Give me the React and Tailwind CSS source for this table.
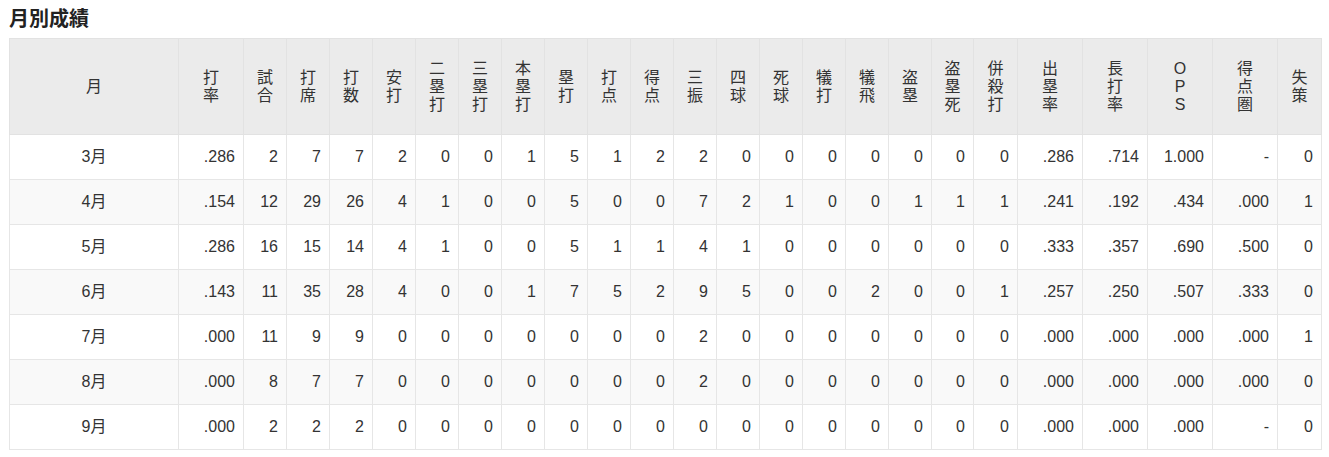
import React from 'react';

// ── Column definitions ────────────────────────────────────────────────────────
const COLS = [
  { label: '打率', w: 'w-[65px]' },
  { label: '試合', w: 'w-[43px]' },
  { label: '打席', w: 'w-[43px]' },
  { label: '打数', w: 'w-[43px]' },
  { label: '安打', w: 'w-[43px]' },
  { label: '二塁打', w: 'w-[43px]' },
  { label: '三塁打', w: 'w-[43px]' },
  { label: '本塁打', w: 'w-[43px]' },
  { label: '塁打', w: 'w-[43px]' },
  { label: '打点', w: 'w-[43px]' },
  { label: '得点', w: 'w-[43px]' },
  { label: '三振', w: 'w-[43px]' },
  { label: '四球', w: 'w-[43px]' },
  { label: '死球', w: 'w-[43px]' },
  { label: '犠打', w: 'w-[43px]' },
  { label: '犠飛', w: 'w-[43px]' },
  { label: '盗塁', w: 'w-[43px]' },
  { label: '盗塁死', w: 'w-[42px]' },
  { label: '併殺打', w: 'w-[44px]' },
  { label: '出塁率', w: 'w-[65px]' },
  { label: '長打率', w: 'w-[65px]' },
  { label: 'OPS', w: 'w-[65px]' },
  { label: '得点圏', w: 'w-[65px]' },
  { label: '失策', w: 'w-[44px]' },
];

const ROWS = [
  ['3月', '.286', 2, 7, 7, 2, 0, 0, 1, 5, 1, 2, 2, 0, 0, 0, 0, 0, 0, 0, '.286', '.714', '1.000', '-', 0],
  ['4月', '.154', 12, 29, 26, 4, 1, 0, 0, 5, 0, 0, 7, 2, 1, 0, 0, 1, 1, 1, '.241', '.192', '.434', '.000', 1],
  ['5月', '.286', 16, 15, 14, 4, 1, 0, 0, 5, 1, 1, 4, 1, 0, 0, 0, 0, 0, 0, '.333', '.357', '.690', '.500', 0],
  ['6月', '.143', 11, 35, 28, 4, 0, 0, 1, 7, 5, 2, 9, 5, 0, 0, 2, 0, 0, 1, '.257', '.250', '.507', '.333', 0],
  ['7月', '.000', 11, 9, 9, 0, 0, 0, 0, 0, 0, 0, 2, 0, 0, 0, 0, 0, 0, 0, '.000', '.000', '.000', '.000', 1],
  ['8月', '.000', 8, 7, 7, 0, 0, 0, 0, 0, 0, 0, 2, 0, 0, 0, 0, 0, 0, 0, '.000', '.000', '.000', '.000', 0],
  ['9月', '.000', 2, 2, 2, 0, 0, 0, 0, 0, 0, 0, 0, 0, 0, 0, 0, 0, 0, 0, '.000', '.000', '.000', '-', 0],
];

const font = "[font-family:'Liberation_Sans','Noto_Sans_CJK_JP',sans-serif]";

// ── Stacked header label (one glyph per line) ─────────────────────────────────
const Stack = ({ text }) => (
  <div className="flex flex-col items-center leading-[18px]">
    {[...text].map((ch, i) => (
      <span key={i}>{ch}</span>
    ))}
  </div>
);

export default function App() {
  return (
    <div className={`bg-white pl-[9px] pt-[6px] pb-2 text-[#333] ${font}`}>
      <h2 className="text-[20px] font-bold leading-[26px] text-[#222] mb-[6px]">月別成績</h2>

      <table className="table-fixed border-collapse w-[1312px] text-[16px] border border-[#dcdcdc]">
        <colgroup>
          <col className="w-[169px]" />
          {COLS.map((c, i) => (
            <col key={i} className={c.w} />
          ))}
        </colgroup>
        <thead>
          <tr className="bg-[#ebebeb]">
            <th className="h-[96px] font-normal border border-[#e2e2e2] text-center align-middle">
              月
            </th>
            {COLS.map((c, i) => (
              <th
                key={i}
                className="h-[96px] font-normal border border-[#e2e2e2] text-center align-middle p-0"
              >
                <Stack text={c.label} />
              </th>
            ))}
          </tr>
        </thead>
        <tbody>
          {ROWS.map((row, r) => (
            <tr key={r} className={r % 2 === 1 ? 'bg-[#f9f9f9]' : 'bg-white'}>
              {row.map((v, i) => (
                <td
                  key={i}
                  className={`h-[45px] border border-[#e6e6e6] align-middle ${
                    i === 0 ? 'text-center' : 'text-right pr-[8px]'
                  }`}
                >
                  {v}
                </td>
              ))}
            </tr>
          ))}
        </tbody>
      </table>
    </div>
  );
}
